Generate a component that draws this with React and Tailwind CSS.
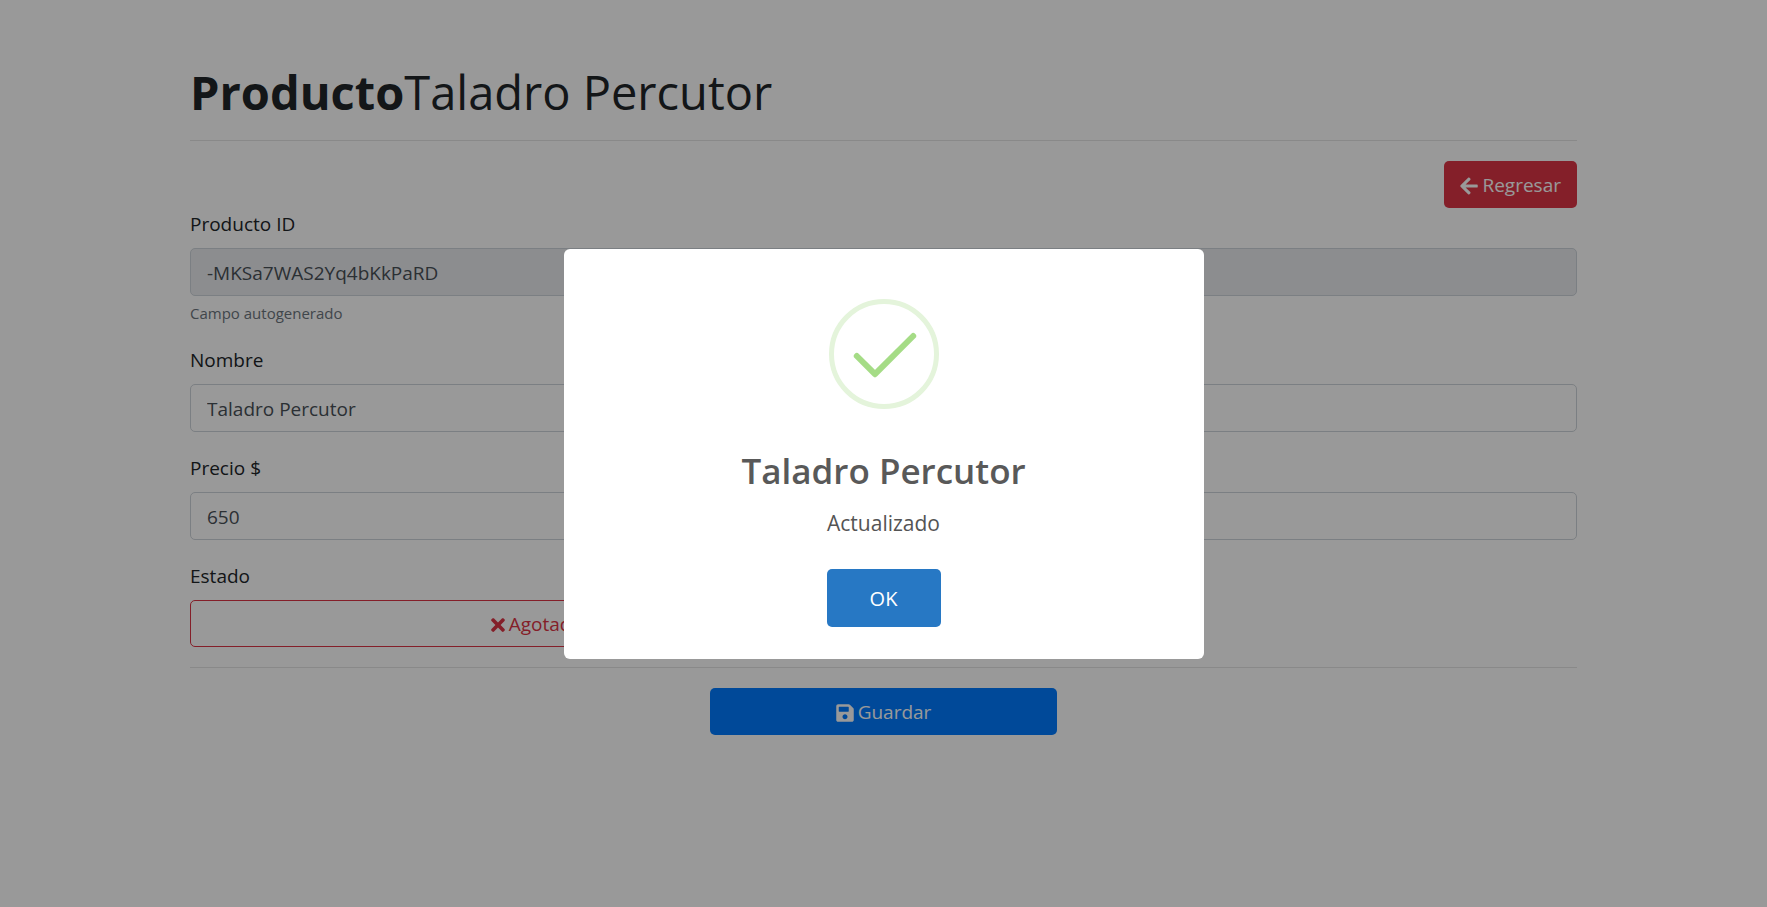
import { FaArrowLeft, FaSave, FaTimes } from "react-icons/fa";

const inputStyle =
  "block h-12 w-full rounded-[5px] border border-[#ced4da] px-4 pt-px text-[19px] text-[#495057]";
const labelStyle = "mb-[7px] block leading-[33px]";
const buttonStyle = "flex h-[47px] items-center justify-center gap-1 rounded-[5px] pt-0.5";

function SuccessIcon() {
  return (
    <svg viewBox="0 0 110 110" className="mb-[34px] size-[110px]" fill="none" aria-hidden="true">
      <circle cx="55" cy="55" r="52.5" stroke="#e4f4db" strokeWidth="5" />
      <path
        d="M27.8 57 46 75.2 84.2 37"
        stroke="#a5dc86"
        strokeWidth="6"
        strokeLinecap="round"
        strokeLinejoin="round"
      />
    </svg>
  );
}

function ProductForm() {
  return (
    <form className="text-[19px]" onSubmit={(event) => event.preventDefault()}>
      <div className="mb-5">
        <label htmlFor="product-id" className={labelStyle}>Producto ID</label>
        <input id="product-id" disabled defaultValue="-MKSa7WAS2Yq4bKkPaRD" className={`${inputStyle} bg-[#e9ecef]`} />
        <small className="mt-[6px] block text-[15px] leading-[22px] text-[#6c757d]">Campo autogenerado</small>
      </div>
      <div className="mb-5">
        <label htmlFor="product-name" className={labelStyle}>Nombre</label>
        <input id="product-name" defaultValue="Taladro Percutor" className={`${inputStyle} bg-white`} />
      </div>
      <div className="mb-5">
        <label htmlFor="product-price" className={labelStyle}>Precio $</label>
        <input id="product-price" inputMode="decimal" defaultValue="650" className={`${inputStyle} bg-white`} />
      </div>
      <div>
        <label htmlFor="product-status" className={labelStyle}>Estado</label>
        <button
          id="product-status"
          type="button"
          className={`${buttonStyle} w-1/2 border border-[#dc3545] text-[#dc3545]`}
        >
          <FaTimes className="h-5 w-[14px]" />
          Agotado
        </button>
      </div>
      <hr className="my-5 border-black/10" />
      <button type="submit" className={`${buttonStyle} mx-auto w-1/4 bg-[#007bff] text-white`}>
        <FaSave className="h-5 w-[18px]" />
        Guardar
      </button>
    </form>
  );
}

function SuccessDialog() {
  return (
    <div className="fixed inset-0 flex items-center justify-center bg-black/40">
      <div
        role="dialog"
        aria-modal="true"
        aria-labelledby="dialog-title"
        className="flex w-[640px] max-w-full flex-col items-center rounded-md bg-white px-6 pt-[50px] pb-8"
      >
        <SuccessIcon />
        <h2 id="dialog-title" className="mb-[7px] text-[35px] leading-[56px] font-semibold text-[#595959]">
          Taladro Percutor
        </h2>
        <p className="mb-[29px] text-[21px] leading-[34px] text-[#545454]">Actualizado</p>
        <button type="button" className="h-[58px] w-[114px] rounded-[5px] bg-[#2778c4] pt-0.5 text-xl text-white">
          OK
        </button>
      </div>
    </div>
  );
}

export default function App() {
  return (
    <div className="min-h-screen bg-white font-['Open_Sans',sans-serif] text-[#212529]">
      <main className="mx-auto max-w-[1425px] px-[19px] pt-[62px] pb-8">
        <h1 className="text-[47px] leading-[60px]">
          <strong className="font-bold">Producto</strong>
          Taladro Percutor
        </h1>
        <hr className="mt-[18px] mb-5 border-black/10" />
        <div className="flex justify-end">
          <a href="#productos" className={`${buttonStyle} bg-[#dc3545] px-4 text-[19px] text-white`}>
            <FaArrowLeft className="h-5 w-[18px]" />
            Regresar
          </a>
        </div>
        <ProductForm />
      </main>
      <SuccessDialog />
    </div>
  );
}
